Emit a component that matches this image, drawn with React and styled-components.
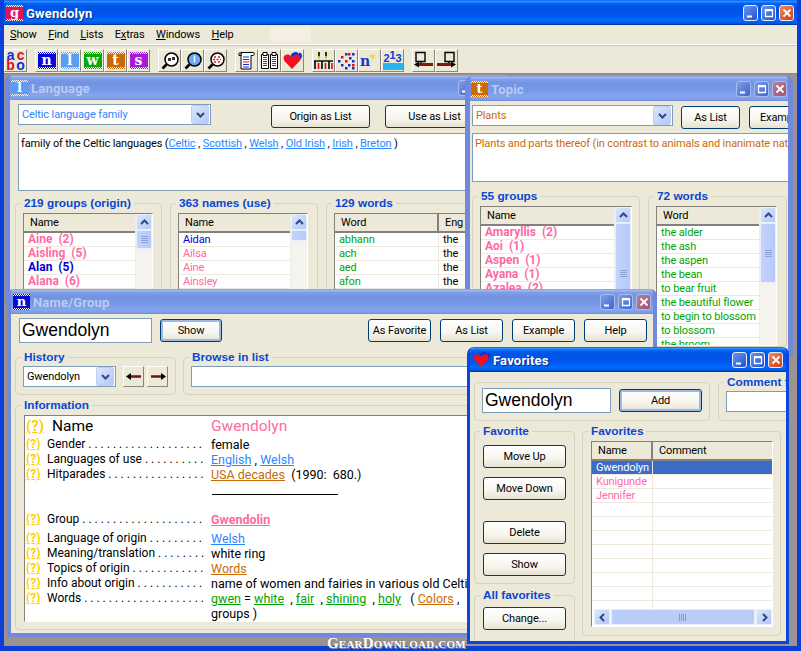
import styled, { createGlobalStyle, css } from 'styled-components';

const PINK = '#ff69a4';
const BLUE = '#0000d8';
const GREEN = '#00a400';
const LINK = '#2b87ff';
const ORANGE = '#c96a08';
const FACE = '#ece9d8';

const GlobalStyle = createGlobalStyle`
  html, body { margin: 0; padding: 0; background: #000; }
  body { font-family: Roboto, "Liberation Sans", sans-serif; font-size: 11px; letter-spacing: -0.12px; color: #000; }
  fieldset { margin: 0; min-width: 0; }
`;

/* main frame */

const Shot = styled.div`
  width: 801px;
  height: 651px;
  position: relative;
  overflow: hidden;
`;

const Frame = styled.div`
  width: 801px;
  height: 651px;
  box-sizing: border-box;
  display: flex;
  flex-direction: column;
  overflow: hidden;
  background: ${FACE};
  border: solid #0b3fd8;
  border-width: 0 4px 5px 4px;
`;

const activeBar = css`
  background: linear-gradient(180deg, #0058ee 0%, #3593ff 5%, #127dff 9%, #0262ee 15%, #0054e3 26%, #0055eb 56%, #005bf5 68%, #026afe 78%, #0062ef 88%, #0052d6 94%, #003092 100%);
`;

const inactiveBar = css`
  background: linear-gradient(180deg, #7c9ce6 0%, #a0b8f0 6%, #7f9fe6 14%, #7393e2 30%, #7899e6 60%, #85a6ee 82%, #7c9ce8 94%, #6d88d8 100%);
`;

const MainTitle = styled.div`
  height: 25px;
  margin: 0 -4px;
  padding: 0 7px 0 6px;
  display: flex;
  align-items: center;
  gap: 3px;
  flex-shrink: 0;
  ${activeBar}
`;

const TitleText = styled.span`
  flex: 1;
  margin-top: 1px;
  font-family: Roboto, "Liberation Sans", sans-serif;
  font-weight: 700;
  font-size: 13px;
  letter-spacing: 0.2px;
  color: ${(p) => (p.$active ? '#fff' : '#b9ccf2')};
  text-shadow: ${(p) => (p.$active ? '1px 1px 1px #0a2a80' : 'none')};
`;

const CaptionGroup = styled.div`
  display: flex;
  gap: 3px;
`;

const CaptionBtn = styled.span`
  width: 15px;
  height: 16px;
  box-sizing: border-box;
  border: 1px solid ${(p) => (p.$active ? '#e8eefc' : '#a8bcec')};
  border-radius: 3px;
  display: flex;
  align-items: center;
  justify-content: center;
  background: ${(p) => {
    if (p.$close) return p.$active ? 'linear-gradient(135deg, #ee8a62, #d23c14)' : 'linear-gradient(135deg, #b88098, #a25070)';
    return p.$active ? 'linear-gradient(135deg, #6a95ee, #2350cf)' : 'linear-gradient(135deg, #7f9fe8, #3f63d0)';
  }};
`;

const MenuBar = styled.div`
  height: 19px;
  padding-left: 6px;
  display: flex;
  align-items: center;
  gap: 11.5px;
  flex-shrink: 0;
  border-bottom: 1px solid #fff;
`;

const MenuItem = styled.span`
  u { text-decoration-thickness: 1px; text-underline-offset: 1px; }
`;

const MenuPatch = styled.span`
  width: 41px;
  height: 15px;
  margin-left: 25px;
  background: #f4efe0;
`;

const ToolBar = styled.div`
  height: 29px;
  padding: 3px 0 0;
  display: flex;
  align-items: flex-start;
  box-sizing: border-box;
  flex-shrink: 0;
  border-top: 1px solid #c8c5b4;
  border-bottom: 1px solid #8e8a7c;
`;

const ToolGroup = styled.div`
  display: flex;
  margin-right: 8px;
`;

const ToolBtn = styled.span`
  width: 23px;
  height: 23px;
  box-sizing: border-box;
  display: flex;
  align-items: center;
  justify-content: center;
  background: ${FACE};
  border: 1px solid;
  border-color: #fff #8a8678 #8a8678 #fff;
`;

const Mdi = styled.div`
  flex: 1;
  position: relative;
  background: #9c9290;
`;

/* icons */

const Letter = styled.span`
  width: ${(p) => p.$size}px;
  height: ${(p) => p.$size - 1}px;
  flex-shrink: 0;
  background: ${(p) => p.$bg};
  color: #fff;
  font-family: "DejaVu Serif", serif;
  font-weight: 700;
  font-size: ${(p) => p.$size - 4}px;
  line-height: ${(p) => p.$size - 2}px;
  text-align: center;
  position: relative;
  overflow: hidden;
  &::before, &::after {
    content: '';
    position: absolute;
    left: 0;
    right: 0;
    height: 2px;
    background: repeating-conic-gradient(#fff 0 25%, transparent 0 50%) 0 0 / 2px 2px;
  }
  &::before { top: 0; }
  &::after { bottom: 0; }
`;

const AbcGrid = styled.span`
  display: grid;
  grid-template-columns: 10px 10px;
  grid-auto-rows: 10px;
  font: 700 14px/9px "Liberation Sans", sans-serif;
  text-align: center;
  span:nth-child(1), span:nth-child(4) { color: #1030d8; }
  span:nth-child(2), span:nth-child(3) { color: #e01010; }
`;

const Rank = styled.span`
  width: 20px;
  height: 19px;
  display: flex;
  justify-content: center;
  color: #0a3ad8;
  font: 700 11px/11px "Liberation Sans", sans-serif;
  background: linear-gradient(180deg, transparent 62%, #28b4ec 62%, #28b4ec 100%);
  span:nth-child(2) { margin-top: -1px; }
  span:nth-child(odd) { margin-top: 2px; }
`;

const NSpark = styled.span`
  width: 19px;
  height: 17px;
  display: flex;
  align-items: flex-end;
  color: #1238c8;
  font: 700 14px/15px "DejaVu Serif", serif;
  &::after {
    content: '✶';
    color: #f0d840;
    font-size: 9px;
    line-height: 11px;
    align-self: flex-start;
    margin-left: -1px;
  }
`;

const Magnifier = ({ kind }) => (
  <svg width="18" height="18" viewBox="0 0 18 18">
    <circle cx="10.5" cy="7.5" r="6.5" fill={kind === 'l' ? '#6aa8f8' : '#fff'} stroke="#000" strokeWidth="1.5" />
    <path d="M5.5 12.5 1.5 16.5" stroke="#000" strokeWidth="2.6" />
    {kind === 'n' && (
      <>
        <rect x="7" y="6" width="3" height="3" fill="#333" />
        <rect x="11" y="5" width="3" height="3" fill="#333" />
      </>
    )}
    {kind === 'l' && <path d="M10.5 3.5v7" stroke="#fff" strokeWidth="1.4" />}
    {kind === 'd' && (
      <path d="M7 5h2M11 5h2M6 7.5h2M9.5 7.5h2M13 7.5h1M7 10h2M11 10h2" stroke="#d02020" strokeWidth="1.4" />
    )}
  </svg>
);

const ScrollIcon = () => (
  <svg width="18" height="19" viewBox="0 0 18 19">
    <path d="M3 1.5h12.5c1 0 1 3-.5 3H13V18H3z" fill="#fff" stroke="#000" />
    <path d="M1 2.5c0-1 2-1 2 0v2H1z" fill="#fff" stroke="#000" />
    <path d="M5 6h6M5 8.5h6" stroke="#1030d8" />
    <path d="M5 11h6" stroke="#e01030" />
    <path d="M5 13.5h6M5 16h6" stroke="#1030d8" />
  </svg>
);

const BookIcon = () => (
  <svg width="19" height="19" viewBox="0 0 19 19">
    <path d="M1.5 3.5h7v14h-7zM10.5 3.5h7v14h-7z" fill="#fff" stroke="#000" />
    <path d="M3 1.5h4v3H3zM12 1.5h4v3h-4z" fill="#fff" stroke="#000" />
    <path d="M3 6.500h4M12 6.500h4M3 10.500h4M12 10.500h4M3 14.500h4M12 14.500h4" stroke="#1030d8" />
    <path d="M3 8.500h4M12 8.500h4M3 12.500h4M12 12.500h4" stroke="#e01030" />
  </svg>
);

const Heart = ({ size = 19 }) => (
  <svg width={size} height={size} viewBox="0 0 19 19">
    <path d="M8 5C8 2 11 1 13 1s2 1 2.5 2C16 1 19 1 19 5c0 3-4 6-5.5 8z" fill="#1030d8" />
    <path d="M9 18 1.5 10C-.5 7 1 3.5 4.500 3.500 7 3.500 8 5 9 6.500 10 5 11 3.500 13.500 3.500 17 3.500 18.500 7 16.500 10z" fill="#f01020" />
  </svg>
);

const BarsIcon = () => (
  <svg width="19" height="19" viewBox="0 0 19 19">
    <path d="M5 1v6M12 1v6" stroke="#000" strokeWidth="1.6" />
    <path d="M5 5v4M12 5v4" stroke="#f0e020" strokeWidth="1.6" />
    <path d="M0 10h19" stroke="#000" strokeWidth="1.4" />
    <path d="M1 10v8M8 10v8M15 10v8" stroke="#000" strokeWidth="1.6" />
    <path d="M4.500 12v6M11.500 12v6M18 12v6" stroke="#d01010" strokeWidth="1.6" />
  </svg>
);

const DOTS = [
  [7, 1, '#1030d8'], [10, 1, '#e01010'], [14, 1, '#1030d8'], [3, 4, '#e01010'], [11, 5, '#1030d8'],
  [0, 8, '#1030d8'], [7, 8, '#e01010'], [14, 8, '#1030d8'], [3, 12, '#1030d8'], [10, 12, '#1030d8'],
  [14, 12, '#e01010'], [7, 15, '#1030d8'], [14, 15, '#1030d8'],
];

const DotsIcon = () => (
  <svg width="18" height="18" viewBox="0 0 18 18">
    {DOTS.map(([x, y, c], i) => (
      <rect key={i} x={x} y={y} width="2.500" height="2.500" fill={c} />
    ))}
  </svg>
);

const MoveIcon = ({ right }) => (
  <svg width="21" height="19" viewBox="0 0 21 19">
    <path d={right ? 'M9 1.500h9v9H9zM13 10.500v3' : 'M3 1.500h9v9H3zM8 10.500v3'} fill="none" stroke="#000" strokeWidth="1.4" />
    {right ? (
      <>
        <path d="M1 13.500h14" stroke="#8a1408" strokeWidth="3" />
        <path d="M15 10.500l5 3-5 3z" fill="#000" />
      </>
    ) : (
      <>
        <path d="M6 13.500h14" stroke="#8a1408" strokeWidth="3" />
        <path d="M6 10.500l-5 3 5 3z" fill="#000" />
      </>
    )}
  </svg>
);

const ArrowIcon = ({ right }) => (
  <svg width="18" height="9" viewBox="0 0 18 9">
    {right ? (
      <>
        <path d="M2 4.500h12" stroke="#7a1008" strokeWidth="2.4" />
        <path d="M12 1l5 3.500-5 3.500z" fill="#000" />
      </>
    ) : (
      <>
        <path d="M4 4.500h12" stroke="#7a1008" strokeWidth="2.4" />
        <path d="M6 1 1 4.500 6 8z" fill="#000" />
      </>
    )}
  </svg>
);

const Chevron = ({ dir = 'down', size = 9 }) => {
  const d = { down: 'M1 3l3.500 3.500L8 3', up: 'M1 6l3.500-3.500L8 6', left: 'M6 1 2.500 4.500 6 8', right: 'M3 1l3.500 3.500L3 8' }[dir];
  return (
    <svg width={size} height={size} viewBox="0 0 9 9">
      <path d={d} fill="none" stroke="#2a4a88" strokeWidth="2" />
    </svg>
  );
};

const Captions = ({ active }) => (
  <CaptionGroup>
    <CaptionBtn $active={active}>
      <svg width="10" height="10" viewBox="0 0 10 10"><path d="M1 8.500h5" stroke="#fff" strokeWidth="2" /></svg>
    </CaptionBtn>
    <CaptionBtn $active={active}>
      <svg width="10" height="10" viewBox="0 0 10 10"><path d="M1.500 2.500h7v6h-7z" fill="none" stroke="#fff" strokeWidth="1.300" /><path d="M1 2h8" stroke="#fff" strokeWidth="2" /></svg>
    </CaptionBtn>
    <CaptionBtn $active={active} $close>
      <svg width="10" height="10" viewBox="0 0 10 10"><path d="M1.500 1.500l7 7M8.500 1.500l-7 7" stroke="#fff" strokeWidth="1.800" /></svg>
    </CaptionBtn>
  </CaptionGroup>
);

/* mdi windows */

const Win = styled.section`
  position: absolute;
  left: ${(p) => p.$x}px;
  top: ${(p) => p.$y}px;
  width: ${(p) => p.$w}px;
  height: ${(p) => p.$h}px;
  box-sizing: border-box;
  display: flex;
  flex-direction: column;
  overflow: hidden;
  border-radius: 7px 7px 0 0;
  border: solid ${(p) => (p.$active ? '#0c46dc' : '#7089dc')};
  border-width: 0 ${(p) => p.$side}px ${(p) => p.$side}px;
`;

const WinTitle = styled.div`
  height: 25px;
  flex-shrink: 0;
  margin: 0 -${(p) => p.$side}px;
  padding: 0 6px;
  display: flex;
  align-items: center;
  gap: 3px;
  ${(p) => (p.$active ? activeBar : inactiveBar)}
`;

const Client = styled.div`
  flex: 1;
  min-height: 0;
  padding: ${(p) => p.$pad};
  background: ${FACE};
  overflow: hidden;
`;

const Window = ({ x, y, w, h, side = 5, active, icon, title, pad, children }) => (
  <Win $x={x} $y={y} $w={w} $h={h} $side={side} $active={active}>
    <WinTitle $side={side} $active={active}>
      {icon}
      <TitleText $active={active}>{title}</TitleText>
      <Captions active={active} />
    </WinTitle>
    <Client $pad={pad}>{children}</Client>
  </Win>
);

/* controls */

const Row = styled.div`
  display: flex;
  align-items: ${(p) => p.$align || 'flex-start'};
  gap: ${(p) => p.$gap || 0}px;
  margin-top: ${(p) => p.$top || 0}px;
  padding-left: ${(p) => p.$left || 0}px;
`;

const PushRight = styled.div`
  display: flex;
  gap: ${(p) => p.$gap}px;
  margin-left: ${(p) => p.$m}px;
  flex-shrink: 0;
`;

const Btn = styled.button`
  width: ${(p) => p.$w}px;
  height: 23px;
  padding: 0;
  flex-shrink: 0;
  border: 1px solid #003c74;
  border-radius: 3px;
  font: 11px Roboto, "Liberation Sans", sans-serif;
  letter-spacing: -0.12px;
  color: #000;
  background: linear-gradient(180deg, #fff 0%, #f6f5ee 60%, #e6e2d2 100%);
  box-shadow: ${(p) => (p.$def ? 'inset 0 0 0 2px #9db9e8' : 'none')};
  margin-top: ${(p) => p.$top || 0}px;
  margin-left: ${(p) => p.$left || 0}px;
  display: block;
`;

const ArrowBtn = styled.span`
  width: 21px;
  height: 21px;
  box-sizing: border-box;
  flex-shrink: 0;
  margin-left: ${(p) => (p.$first ? 4 : 0)}px;
  display: flex;
  align-items: center;
  justify-content: center;
  background: ${FACE};
  border: 1px solid;
  border-color: #fff #8a8678 #8a8678 #fff;
`;

const ComboBox = styled.div`
  width: ${(p) => p.$w}px;
  height: 21px;
  box-sizing: border-box;
  flex-shrink: 0;
  display: flex;
  align-items: center;
  background: #fff;
  border: 1px solid #7f9db9;
  padding: 0 1px 0 3px;
  color: ${(p) => p.$color || '#000'};
`;

const ComboText = styled.span`
  flex: 1;
  white-space: nowrap;
  overflow: hidden;
`;

const ComboArrow = styled.span`
  width: 16px;
  height: 17px;
  border: 1px solid #bcd0f4;
  border-radius: 2px;
  background: linear-gradient(135deg, #dce6fb, #b4c8f6);
  display: flex;
  align-items: center;
  justify-content: center;
`;

const Combo = ({ w, color, children }) => (
  <ComboBox $w={w} $color={color}>
    <ComboText>{children}</ComboText>
    <ComboArrow><Chevron /></ComboArrow>
  </ComboBox>
);

const TextInput = styled.div`
  width: ${(p) => p.$w}px;
  height: ${(p) => p.$h || 25}px;
  box-sizing: border-box;
  flex-shrink: 0;
  background: #fff;
  border: 1px solid #7f9db9;
  padding-left: 2px;
  font-family: "Liberation Sans", sans-serif;
  font-size: 17.5px;
  letter-spacing: 0;
  line-height: ${(p) => (p.$h || 25) - 3}px;
  margin-top: ${(p) => p.$top || 0}px;
`;

const DescBox = styled.div`
  width: ${(p) => p.$w}px;
  height: ${(p) => p.$h}px;
  box-sizing: border-box;
  margin: ${(p) => p.$mt}px 0 0 ${(p) => p.$left}px;
  padding: 3px 2px;
  background: #fff;
  border: 1px solid #7f9db9;
  white-space: nowrap;
  overflow: hidden;
  color: ${(p) => p.$color || '#000'};
`;

const Group = styled.fieldset`
  width: ${(p) => p.$w}px;
  height: ${(p) => (p.$h ? `${p.$h}px` : 'auto')};
  box-sizing: border-box;
  flex-shrink: 0;
  padding: ${(p) => p.$pad || '0 7px'};
  margin-top: ${(p) => p.$top || 0}px;
  border: 1px solid #d6d2bf;
  border-radius: 4px;
`;

const Legend = styled.legend`
  margin-left: ${(p) => p.$m ?? -2}px;
  padding: 0 3px;
  height: 14px;
  line-height: 14px;
  font-family: "Liberation Sans", sans-serif;
  font-weight: 700;
  font-size: 11.8px;
  letter-spacing: 0;
  color: #0a46d4;
  white-space: nowrap;
`;

const Link = styled.span`
  color: ${(p) => p.$color};
  text-decoration: underline;
  text-underline-offset: 1px;
  font-weight: ${(p) => (p.$bold ? 700 : 400)};
`;

/* list views */

const ListBox = styled.div`
  width: ${(p) => p.$w}px;
  height: ${(p) => p.$h}px;
  margin-top: ${(p) => p.$top || 0}px;
  box-sizing: border-box;
  display: flex;
  background: #fff;
  overflow: hidden;
  border: 1px solid #85807a;
  border-right-color: #fff;
  border-bottom-color: #fff;
`;

const ListMain = styled.div`
  flex: 1;
  min-width: 0;
  overflow: hidden;
  display: flex;
  flex-direction: column;
`;

const RowsArea = styled.div`
  flex: 1;
  min-height: 0;
  overflow: hidden;
`;

const HeaderRow = styled.div`
  display: flex;
  height: 17px;
  flex-shrink: 0;
  background: ${FACE};
  border-bottom: 2px solid #85807a;
`;

const HeaderCell = styled.div`
  width: ${(p) => p.$w}px;
  flex-shrink: 0;
  box-sizing: border-box;
  padding-left: 6px;
  line-height: 18px;
  border-right: 2px solid #85807a;
  white-space: nowrap;
  &:last-child { border-right: 0; flex: 1; }
`;

const DataRow = styled.div`
  display: flex;
  height: 14px;
  box-sizing: border-box;
  border-bottom: 1px solid #efe9dc;
  line-height: 13px;
`;

const DataCell = styled.div`
  width: ${(p) => p.$w}px;
  flex-shrink: 0;
  box-sizing: border-box;
  padding-left: 4px;
  white-space: pre;
  overflow: hidden;
  color: ${(p) => (p.$sel ? '#fff' : p.$color || '#000')};
  background: ${(p) => (p.$sel ? '#3a6cc8' : 'transparent')};
  font-weight: ${(p) => (p.$bold ? 700 : 400)};
  font-size: ${(p) => (p.$bold ? 12 : 11)}px;
  letter-spacing: ${(p) => (p.$bold ? 0 : -0.12)}px;
  border-right: 1px solid #efe9dc;
  &:last-child { border-right: 0; flex: 1; }
`;

const ScrollTrack = styled.div`
  width: 16px;
  flex-shrink: 0;
  background: #f4f3ee;
  border-left: 1px solid #eee;
`;

const ScrollBtn = styled.div`
  height: 16px;
  box-sizing: border-box;
  background: linear-gradient(135deg, #dce6fb, #b4c8f6);
  border: 1px solid #e8eefc;
  border-radius: 2px;
  display: flex;
  align-items: center;
  justify-content: center;
`;

const Thumb = styled.div`
  height: ${(p) => p.$h}px;
  box-sizing: border-box;
  background: linear-gradient(90deg, #c4d4fa, #b6caf8);
  border: 1px solid #e8eefc;
  border-radius: 2px;
  display: flex;
  align-items: center;
  justify-content: center;
  &::before {
    content: '';
    width: 7px;
    height: 7px;
    display: ${(p) => (p.$grip ? 'block' : 'none')};
    background: repeating-linear-gradient(180deg, #8aa4dc 0 1px, transparent 1px 2px);
  }
`;

const ListView = ({ w, h, columns, rows, thumb }) => (
  <ListBox $w={w} $h={h}>
    <ListMain>
      <HeaderRow>
        {columns.map((c) => (
          <HeaderCell key={c.label} $w={c.w}>{c.label}</HeaderCell>
        ))}
      </HeaderRow>
      <RowsArea>
        {rows.map((r, i) => (
          <DataRow key={i}>
            {columns.map((c, j) => {
              const cell = j === 0 ? r : { text: r.second, color: '#000' };
              return (
                <DataCell key={c.label} $w={c.w} $color={cell.color} $bold={cell.bold}>
                  {cell.text}
                </DataCell>
              );
            })}
          </DataRow>
        ))}
      </RowsArea>
    </ListMain>
    {thumb && (
      <ScrollTrack>
        <ScrollBtn><Chevron dir="up" /></ScrollBtn>
        <Thumb $h={thumb} $grip={thumb > 12} />
      </ScrollTrack>
    )}
  </ListBox>
);

const HBar = styled.div`
  height: 16px;
  flex-shrink: 0;
  margin: 0 0 1px 2px;
  display: flex;
  gap: 1px;
  background: #f4f3ee;
`;

const HThumb = styled.div`
  flex: 1;
  background: #b9cdf8;
  border: 1px solid #e8eefc;
  border-radius: 2px;
  display: flex;
  align-items: center;
  justify-content: center;
  &::before {
    content: '';
    width: 8px;
    height: 7px;
    background: repeating-linear-gradient(90deg, #7f9ad8 0 1px, transparent 1px 2px);
  }
`;

const HEnd = styled(ScrollBtn)`
  width: 16px;
  flex-shrink: 0;
`;

/* information panel */

const InfoBox = styled.div`
  height: 207px;
  width: 625px;
  box-sizing: border-box;
  background: #fff;
  padding: 1px 0 0 1px;
  border: 1px solid #85807a;
  border-right-color: #fff;
  border-bottom-color: #fff;
  overflow: hidden;
`;

const InfoRow = styled.div`
  display: flex;
  height: ${(p) => (p.$big ? 20 : 15)}px;
  line-height: ${(p) => (p.$big ? 19 : 15)}px;
  margin-top: ${(p) => p.$top || 0}px;
  white-space: nowrap;
  letter-spacing: 0;
  font-size: ${(p) => (p.$big ? 15.5 : 12.5)}px;
`;

const Help = styled.span`
  width: ${(p) => (p.$big ? 26 : 21)}px;
  flex-shrink: 0;
  color: #ffce00;
  font-weight: 700;
  font-size: ${(p) => (p.$big ? 15 : 12)}px;
  text-decoration: underline;
  text-underline-offset: 1px;
`;

const InfoLabel = styled.span`
  width: ${(p) => (p.$big ? 159 : 157)}px;
  margin-right: ${(p) => (p.$big ? 0 : 7)}px;
  font-size: ${(p) => (p.$big ? 15.5 : 12)}px;
  flex-shrink: 0;
  overflow: hidden;
`;

const InfoValue = styled.span`
  color: ${(p) => p.$color || '#000'};
`;

const Rule = styled.div`
  width: 126px;
  height: 1px;
  background: #000;
  margin: 12px 0 17px 186px;
`;

const Grip = styled.div`
  display: flex;
  justify-content: flex-end;
  height: 0;
  svg { display: block; margin-top: -10px; }
`;

const Watermark = styled.div`
  position: absolute;
  left: 327px;
  top: 635px;
  height: 16px;
  font: 700 15px/16px "Liberation Serif", serif;
  font-variant: small-caps;
  letter-spacing: 0.2px;
  color: #fff;
  text-shadow: 0 0 2px #777, 1px 1px 0 #999;
  white-space: nowrap;
`;

const dots = (s, n) => `${s} ${' .'.repeat(n)}`;

const boldPink = (text) => ({ text, color: PINK, bold: true });

const ORIGIN_ROWS = [boldPink('Aine  (2)'), boldPink('Aisling  (5)'), { text: 'Alan  (5)', color: BLUE, bold: true }, boldPink('Alana  (6)')];
const USE_ROWS = [
  { text: 'Aidan', color: BLUE },
  { text: 'Ailsa', color: PINK },
  { text: 'Aine', color: PINK },
  { text: 'Ainsley', color: PINK },
];
const WORD_ROWS = ['abhann', 'ach', 'aed', 'afon'].map((text) => ({ text, color: GREEN, second: 'the' }));
const TOPIC_GROUPS = [boldPink('Amaryllis  (2)'), boldPink('Aoi  (1)'), boldPink('Aspen  (1)'), boldPink('Ayana  (1)'), boldPink('Azalea  (2)')];
const TOPIC_WORDS = [
  'the alder', 'the ash', 'the aspen', 'the bean', 'to bear fruit',
  'the beautiful flower', 'to begin to blossom', 'to blossom', 'the broom',
].map((text) => ({ text, color: GREEN }));
const FAV_ROWS = [
  { text: 'Gwendolyn', sel: true },
  { text: 'Kunigunde', color: PINK },
  { text: 'Jennifer', color: PINK },
  ...Array.from({ length: 9 }, () => ({ text: '' })),
];

const LanguageWindow = () => (
  <Window x={1} y={1} w={510} h={230} title="Language" pad="4px 0 0 5px" icon={<Letter $size={17} $bg="#5b9df2">l</Letter>}>
    <Row $left={3}>
      <Combo w={193} color={LINK}>Celtic language family</Combo>
      <PushRight $m={60} $gap={15}>
        <Btn $w={99} $top={1}>Origin as List</Btn>
        <Btn $w={99} $top={1}>Use as List</Btn>
      </PushRight>
    </Row>
    <DescBox $w={470} $h={58} $left={3} $mt={5}>
      family of the Celtic languages (<Link $color={LINK}>Celtic</Link> , <Link $color={LINK}>Scottish</Link> , <Link $color={LINK}>Welsh</Link> , <Link $color={LINK}>Old Irish</Link> , <Link $color={LINK}>Irish</Link> , <Link $color={LINK}>Breton</Link> )
    </DescBox>
    <Row $top={5} $gap={8}>
      <Group $w={147}>
        <Legend>219 groups (origin)</Legend>
        <Row $top={3}>
          <ListView w={130} h={100} columns={[{ label: 'Name', w: 114 }]} rows={ORIGIN_ROWS} thumb={19} />
        </Row>
      </Group>
      <Group $w={148}>
        <Legend>363 names (use)</Legend>
        <Row $top={3}>
          <ListView w={130} h={100} columns={[{ label: 'Name', w: 114 }]} rows={USE_ROWS} thumb={11} />
        </Row>
      </Group>
      <Group $w={180}>
        <Legend>129 words</Legend>
        <Row $top={3}>
          <ListView w={180} h={100} columns={[{ label: 'Word', w: 104 }, { label: 'Eng', w: 60 }]} rows={WORD_ROWS} />
        </Row>
      </Group>
    </Row>
  </Window>
);

const TopicWindow = () => (
  <Window x={461} y={2} w={328} h={280} title="Topic" pad="4px 0 0 2px" icon={<Letter $size={17} $bg="#c96a08">t</Letter>}>
    <Row>
      <Combo w={201} color={ORANGE}>Plants</Combo>
      <PushRight $m={8} $gap={9}>
        <Btn $w={59} $top={1}>As List</Btn>
        <Btn $w={63} $top={1}>Example</Btn>
      </PushRight>
    </Row>
    <DescBox $w={340} $h={49} $left={0} $mt={4} $color={ORANGE}>
      Plants and parts thereof (in contrast to animals and inanimate nature)
    </DescBox>
    <Row $top={7} $gap={8}>
      <Group $w={168}>
        <Legend>55 groups</Legend>
        <Row $top={3}>
          <ListView w={152} h={140} columns={[{ label: 'Name', w: 136 }]} rows={TOPIC_GROUPS} thumb={100} />
        </Row>
      </Group>
      <Group $w={139}>
        <Legend>72 words</Legend>
        <Row $top={3}>
          <ListView w={121} h={140} columns={[{ label: 'Word', w: 105 }]} rows={TOPIC_WORDS} thumb={60} />
        </Row>
      </Group>
    </Row>
  </Window>
);

const NameWindow = () => (
  <Window x={3} y={215} w={650} h={348} side={4} title="Name/Group" pad="4px 0 0 4px" icon={<Letter $size={17} $bg="#0808d8">n</Letter>}>
    <Row $left={4}>
      <TextInput $w={133}>Gwendolyn</TextInput>
      <Btn $w={62} $left={8} $top={1} $def>Show</Btn>
      <PushRight $m={146} $gap={9}>
        <Btn $w={63} $top={1}>As Favorite</Btn>
        <Btn $w={63} $top={1}>As List</Btn>
        <Btn $w={63} $top={1}>Example</Btn>
        <Btn $w={63} $top={1}>Help</Btn>
      </PushRight>
    </Row>
    <Row $top={7} $gap={7}>
      <Group $w={161} $h={45}>
        <Legend>History</Legend>
        <Row $gap={3} $top={2}>
          <Combo w={93}>Gwendolyn</Combo>
          <ArrowBtn $first><ArrowIcon /></ArrowBtn>
          <ArrowBtn><ArrowIcon right /></ArrowBtn>
        </Row>
      </Group>
      <Group $w={462} $h={45}>
        <Legend>Browse in list</Legend>
        <TextInput $w={446} $h={21} $top={2} />
      </Group>
    </Row>
    <Group $w={630} $h={232} $top={3} $pad="3px 8px 0">
      <Legend $m={-3}>Information</Legend>
      <InfoBox>
        <InfoRow $big>
          <Help $big>(?)</Help>
          <InfoLabel $big>Name</InfoLabel>
          <InfoValue $color={PINK}>Gwendolyn</InfoValue>
        </InfoRow>
        <InfoRow>
          <Help>(?)</Help>
          <InfoLabel>{dots('Gender', 19)}</InfoLabel>
          <InfoValue>female</InfoValue>
        </InfoRow>
        <InfoRow>
          <Help>(?)</Help>
          <InfoLabel>{dots('Languages of use', 20)}</InfoLabel>
          <InfoValue><Link $color={LINK}>English</Link> , <Link $color={LINK}>Welsh</Link></InfoValue>
        </InfoRow>
        <InfoRow>
          <Help>(?)</Help>
          <InfoLabel>{dots('Hitparades', 20)}</InfoLabel>
          <InfoValue><Link $color={ORANGE}>USA decades</Link>&nbsp; (1990:&nbsp; 680.)</InfoValue>
        </InfoRow>
        <Rule />
        <InfoRow>
          <Help>(?)</Help>
          <InfoLabel>{dots('Group', 24)}</InfoLabel>
          <InfoValue><Link $color={PINK} $bold>Gwendolin</Link></InfoValue>
        </InfoRow>
        <InfoRow $top={4}>
          <Help>(?)</Help>
          <InfoLabel>{dots('Language of origin', 12)}</InfoLabel>
          <InfoValue><Link $color={LINK}>Welsh</Link></InfoValue>
        </InfoRow>
        <InfoRow>
          <Help>(?)</Help>
          <InfoLabel>{dots('Meaning/translation', 12)}</InfoLabel>
          <InfoValue>white ring</InfoValue>
        </InfoRow>
        <InfoRow>
          <Help>(?)</Help>
          <InfoLabel>{dots('Topics of origin', 16)}</InfoLabel>
          <InfoValue><Link $color={ORANGE}>Words</Link></InfoValue>
        </InfoRow>
        <InfoRow>
          <Help>(?)</Help>
          <InfoLabel>{dots('Info about origin', 16)}</InfoLabel>
          <InfoValue>name of women and fairies in various old Celtic languages</InfoValue>
        </InfoRow>
        <InfoRow>
          <Help>(?)</Help>
          <InfoLabel>{dots('Words', 24)}</InfoLabel>
          <InfoValue>
            <Link $color={GREEN}>gwen</Link> = <Link $color={GREEN}>white</Link>&nbsp; , <Link $color={GREEN}>fair</Link>&nbsp; , <Link $color={GREEN}>shining</Link>&nbsp; , <Link $color={GREEN}>holy</Link>&nbsp;&nbsp; ( <Link $color={ORANGE}>Colors</Link> ,
          </InfoValue>
        </InfoRow>
        <InfoRow>
          <Help />
          <InfoLabel />
          <InfoValue>groups )</InfoValue>
        </InfoRow>
      </InfoBox>
    </Group>
  </Window>
);

const FavoritesWindow = () => (
  <Window x={463} y={273} w={322} h={297} side={3} active title="Favorites" pad="10px 0 0 4px" icon={<Heart size={17} />}>
    <Row $gap={8}>
      <Group $w={236} $h={39} $pad="5px 7px 0">
        <Row $gap={8}>
          <TextInput $w={129}>Gwendolyn</TextInput>
          <Btn $w={83} $top={1} $def>Add</Btn>
        </Row>
      </Group>
      <Group $w={120} $h={46} $top={-7}>
        <Legend>Comment for</Legend>
        <TextInput $w={100} $h={21} $top={2} />
      </Group>
    </Row>
    <Row $top={3} $gap={7}>
      <div>
        <Group $w={101} $h={160} $pad="0 8px">
          <Legend $m={-3}>Favorite</Legend>
          <Btn $w={83} $top={7}>Move Up</Btn>
          <Btn $w={83} $top={9}>Move Down</Btn>
          <Btn $w={83} $top={21}>Delete</Btn>
          <Btn $w={83} $top={9}>Show</Btn>
        </Group>
        <Group $w={101} $h={60} $top={4} $pad="0 8px">
          <Legend $m={-3}>All favorites</Legend>
          <Btn $w={83} $top={5}>Change...</Btn>
        </Group>
      </div>
      <Group $w={199} $h={212} $pad="0 8px">
        <Legend $m={-3}>Favorites</Legend>
        <ListBox $w={182} $h={186} $top={3}>
          <ListMain>
            <HeaderRow>
              <HeaderCell $w={61}>Name</HeaderCell>
              <HeaderCell $w={120}>Comment</HeaderCell>
            </HeaderRow>
            <RowsArea>
              {FAV_ROWS.map((r, i) => (
                <DataRow key={i}>
                  <DataCell $w={61} $color={r.color} $sel={r.sel}>{r.text}</DataCell>
                  <DataCell $w={120} $sel={r.sel} />
                </DataRow>
              ))}
            </RowsArea>
            <HBar>
              <HEnd><Chevron dir="left" /></HEnd>
              <HThumb />
              <HEnd><Chevron dir="right" /></HEnd>
            </HBar>
          </ListMain>
        </ListBox>
      </Group>
    </Row>
    <Grip>
      <svg width="12" height="12" viewBox="0 0 12 12">
        <path d="M11 3 3 11M11 7l-4 4M11 10l-1 1" stroke="#a8a492" strokeWidth="1.200" />
      </svg>
    </Grip>
  </Window>
);

const MENU = [
  ['', 'S', 'how'],
  ['', 'F', 'ind'],
  ['', 'L', 'ists'],
  ['E', 'x', 'tras'],
  ['', 'W', 'indows'],
  ['', 'H', 'elp'],
];

const App = () => (
  <Shot>
    <GlobalStyle />
    <Frame>
      <MainTitle>
        <Letter $size={17} $bg="#e8105c">g</Letter>
        <TitleText $active>Gwendolyn</TitleText>
        <Captions active />
      </MainTitle>
      <MenuBar>
        {MENU.map(([a, u, b]) => (
          <MenuItem key={b}>{a}<u>{u}</u>{b}</MenuItem>
        ))}
        <MenuPatch />
      </MenuBar>
      <ToolBar>
        <ToolGroup>
          <ToolBtn>
            <AbcGrid><span>a</span><span>c</span><span>b</span><span>o</span></AbcGrid>
          </ToolBtn>
        </ToolGroup>
        <ToolGroup>
          <ToolBtn><Letter $size={18} $bg="#0808d8">n</Letter></ToolBtn>
          <ToolBtn><Letter $size={18} $bg="#5b9df2">l</Letter></ToolBtn>
          <ToolBtn><Letter $size={18} $bg="#08a808">w</Letter></ToolBtn>
          <ToolBtn><Letter $size={18} $bg="#c96a08">t</Letter></ToolBtn>
          <ToolBtn><Letter $size={18} $bg="#a818d8">s</Letter></ToolBtn>
        </ToolGroup>
        <ToolGroup>
          <ToolBtn><Magnifier kind="n" /></ToolBtn>
          <ToolBtn><Magnifier kind="l" /></ToolBtn>
          <ToolBtn><Magnifier kind="d" /></ToolBtn>
        </ToolGroup>
        <ToolGroup>
          <ToolBtn><ScrollIcon /></ToolBtn>
          <ToolBtn><BookIcon /></ToolBtn>
          <ToolBtn><Heart /></ToolBtn>
        </ToolGroup>
        <ToolGroup>
          <ToolBtn><BarsIcon /></ToolBtn>
          <ToolBtn><DotsIcon /></ToolBtn>
          <ToolBtn><NSpark>n</NSpark></ToolBtn>
          <ToolBtn><Rank><span>2</span><span>1</span><span>3</span></Rank></ToolBtn>
        </ToolGroup>
        <ToolGroup>
          <ToolBtn><MoveIcon /></ToolBtn>
          <ToolBtn><MoveIcon right /></ToolBtn>
        </ToolGroup>
      </ToolBar>
      <Mdi>
        <LanguageWindow />
        <TopicWindow />
        <NameWindow />
        <FavoritesWindow />
      </Mdi>
    </Frame>
    <Watermark>GearDownload.com</Watermark>
  </Shot>
);

export default App;
